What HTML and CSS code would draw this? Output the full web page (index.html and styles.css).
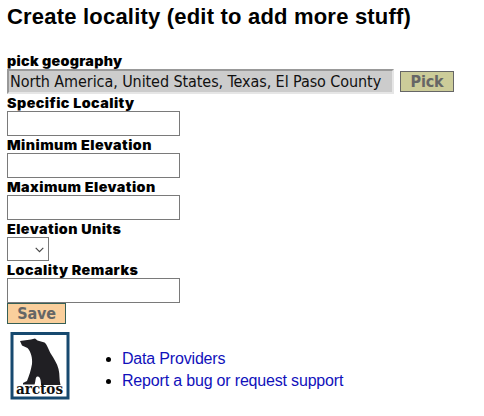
FILE: index.html
```html
<!DOCTYPE html>
<html lang="en">
<head>
<meta charset="utf-8">
<title>Create locality</title>
<link rel="stylesheet" href="styles.css">
</head>
<body>
<h1 class="title"><span>Create locality (edit to add more stuff)</span></h1>
<form class="form">
  <label class="label label-first" for="geog">pick geography</label>
  <div class="geography">
    <div class="geog-value" id="geog"><span>North America, United States, Texas, El Paso County</span></div>
    <button class="btn pick" type="button">Pick</button>
  </div>
  <label class="label" for="spec">Specific Locality</label>
  <input class="field" id="spec" type="text">
  <label class="label" for="min">Minimum Elevation</label>
  <input class="field" id="min" type="text">
  <label class="label" for="max">Maximum Elevation</label>
  <input class="field" id="max" type="text">
  <label class="label" for="units">Elevation Units</label>
  <div class="select" id="units">
    <svg width="9" height="6" viewBox="0 0 9 6"><path d="M.7 .8 4.5 4.6 8.3 .8" fill="none" stroke="#444" stroke-width="1.1"/></svg>
  </div>
  <label class="label" for="remarks">Locality Remarks</label>
  <input class="field" id="remarks" type="text">
  <button class="btn save" type="button">Save</button>
</form>
<footer class="footer">
  <svg class="logo" width="61" height="70" viewBox="0 0 61 70">
    <rect x="3" y="1.500" width="56" height="64.500" fill="#fff" stroke="#17496f" stroke-width="3"/>
    <path d="M11 9 L22 7.500 L26 6.500 L28.500 8.500 L35.500 10.500 C38.500 13 39.500 18 42 22 C45 27 48 31 49.500 37 C51 43 50 48 51.500 53 H32 C32 48 31 44 28.500 44.500 C26 45 27 49 25.500 52.500 H14 V51 L18 49 C20 44 22 38 23 32 C23.500 26 22 20 18.500 16 L13 13.500 Z" fill="#201f23"/>
    <text class="logo-text" x="30.500" y="62" text-anchor="middle" textLength="47" lengthAdjust="spacingAndGlyphs">arctos</text>
  </svg>
  <ul class="links">
    <li><a href="#">Data Providers</a></li>
    <li><a href="#">Report a bug or request support</a></li>
  </ul>
</footer>
</body>
</html>
```
FILE: styles.css
```css
* { box-sizing: border-box; }
body {
  margin: 0;
  padding: 0 7px;
  background: #fff;
  color: #000;
  font-family: "Liberation Sans", Arial, sans-serif;
  overflow: hidden;
}
.title {
  margin: 0;
  height: 53px;
  padding-top: 4px;
  font-size: 22px;
  line-height: 25px;
  letter-spacing: 0.2px;
  white-space: nowrap;
}
.form { display: flex; flex-direction: column; align-items: flex-start; }
.label {
  height: 17px;
  padding-top: 2px;
  font-family: Inter, "Arial Black", sans-serif;
  font-size: 13px;
  font-weight: 900;
  line-height: 15px;
  letter-spacing: 0.4px;
  white-space: nowrap;
  transform: scaleX(1.1);
  transform-origin: 0 0;
}
.label-first { padding-top: 1px; letter-spacing: 0.25px; }
.geography { display: flex; align-items: flex-start; gap: 6px; height: 25px; margin-top: -1px; }
.geog-value {
  width: 387px;
  height: 25px;
  padding-left: 1px;
  border: 2px solid;
  border-color: #999 #e6e6e6 #e6e6e6 #999;
  background: #ccc;
  font: 16px/22px "DejaVu Sans Condensed", Tahoma, sans-serif;
  letter-spacing: -0.08px;
  color: #111;
  white-space: nowrap;
}
.field, .select {
  height: 25px;
  border: 1px solid #7a7a7a;
  border-radius: 0;
  background: #fff;
}
.field { width: 173px; margin: 0; padding: 1px; }
.select { width: 42px; height: 24px; display: flex; justify-content: flex-end; align-items: center; padding: 2px 4px 0 0; }
.btn {
  height: 21px;
  margin: 0;
  padding: 0;
  border: 1px solid #666;
  font: bold 16px/18px "DejaVu Sans Condensed", Tahoma, sans-serif;
  letter-spacing: -0.15px;
  color: #666;
}
.pick { width: 54px; margin-top: 2px; background: #cc9; }
.save { width: 59px; background: #facf9c; border-color: #365f55; }
.footer { display: flex; align-items: flex-start; margin-top: 8px; padding-left: 2px; }
.logo { flex: none; }
.logo-text { font: bold 14px "DejaVu Serif", serif; fill: #111; }
.links { margin: 16px 0 0 12px; padding-left: 40px; font-size: 16px; line-height: 22px; letter-spacing: -0.18px; }
.links a { color: #1111bb; text-decoration: none; }
```
